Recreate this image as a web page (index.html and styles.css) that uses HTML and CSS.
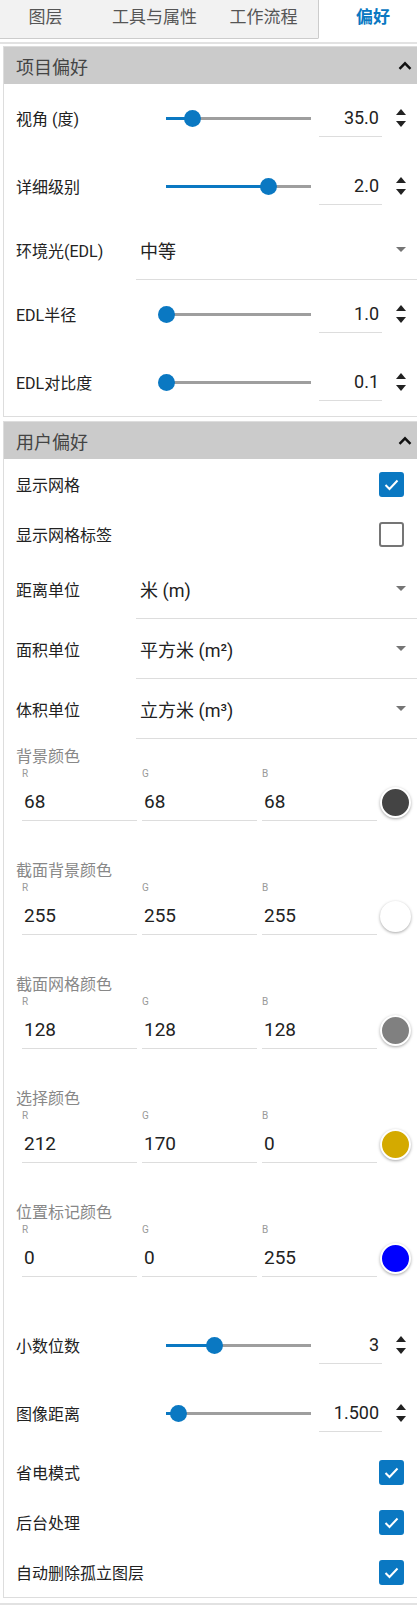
FILE: index.html
```html
<!DOCTYPE html>
<html lang="zh">
<head>
    <meta charset="UTF-8">
    <title>偏好</title>
    <link rel="stylesheet" href="styles.css">
</head>
<body>
<div id="tabs">
    <div class="inner">
        <a href="javascript:;" class="tab">图层</a>
        <a href="javascript:;" class="tab">工具与属性</a>
        <a href="javascript:;" class="tab">工作流程</a>
        <a href="javascript:;" class="tab on">偏好</a>
    </div>
</div>
<div class="divider"></div>

<!-- 项目偏好 -->
<div class="panel">
    <div class="panel-head">
        <span>项目偏好</span>
        <svg width="14" height="9" viewBox="0 0 14 9"><path d="M1.5 7.8 L7 2.3 L12.5 7.8" fill="none" stroke="#111" stroke-width="2.4"/></svg>
    </div>
    <div class="row row-slider">
        <span class="label">视角 (度)</span>
        <div class="slider"><div class="fill" style="width: 18.6%;"></div><span class="thumb" style="left: 18.6%;"></span></div>
        <div class="num">35.0</div>
        <div class="spin"><i class="up"></i><i class="down"></i></div>
    </div>
    <div class="row row-slider">
        <span class="label">详细级别</span>
        <div class="slider"><div class="fill" style="width: 71%;"></div><span class="thumb" style="left: 71%;"></span></div>
        <div class="num">2.0</div>
        <div class="spin"><i class="up"></i><i class="down"></i></div>
    </div>
    <div class="row row-select">
        <span class="label">环境光(EDL)</span>
        <div class="select"><span>中等</span><i class="caret"></i></div>
    </div>
    <div class="row row-slider">
        <span class="label">EDL半径</span>
        <div class="slider"><div class="fill" style="width: 0%;"></div><span class="thumb" style="left: 0%;"></span></div>
        <div class="num">1.0</div>
        <div class="spin"><i class="up"></i><i class="down"></i></div>
    </div>
    <div class="row row-slider">
        <span class="label">EDL对比度</span>
        <div class="slider"><div class="fill" style="width: 0%;"></div><span class="thumb" style="left: 0%;"></span></div>
        <div class="num">0.1</div>
        <div class="spin"><i class="up"></i><i class="down"></i></div>
    </div>
</div>

<!-- 用户偏好 -->
<div class="panel">
    <div class="panel-head">
        <span>用户偏好</span>
        <svg width="14" height="9" viewBox="0 0 14 9"><path d="M1.5 7.8 L7 2.3 L12.5 7.8" fill="none" stroke="#111" stroke-width="2.4"/></svg>
    </div>
    <div class="row row-check">
        <span class="label">显示网格</span>
        <span class="box checked"><svg width="21" height="21" viewBox="0 0 21 21"><path d="M4.5 11 L8.5 15 L16.5 6.5" fill="none" stroke="#fff" stroke-width="2"/></svg></span>
    </div>
    <div class="row row-check">
        <span class="label">显示网格标签</span>
        <span class="box"></span>
    </div>
    <div class="row row-select">
        <span class="label">距离单位</span>
        <div class="select"><span>米 (m)</span><i class="caret"></i></div>
    </div>
    <div class="row row-select">
        <span class="label">面积单位</span>
        <div class="select"><span>平方米 (m²)</span><i class="caret"></i></div>
    </div>
    <div class="row row-select">
        <span class="label">体积单位</span>
        <div class="select"><span>立方米 (m³)</span><i class="caret"></i></div>
    </div>

    <div class="color">
        <div class="color-name">背景颜色</div>
        <div class="rgb">
            <div class="field"><div class="key">R</div><div class="val">68</div></div>
            <div class="field"><div class="key">G</div><div class="val">68</div></div>
            <div class="field"><div class="key">B</div><div class="val">68</div></div>
            <span class="swatch" style="background: rgb(68,68,68);"></span>
        </div>
    </div>
    <div class="color">
        <div class="color-name">截面背景颜色</div>
        <div class="rgb">
            <div class="field"><div class="key">R</div><div class="val">255</div></div>
            <div class="field"><div class="key">G</div><div class="val">255</div></div>
            <div class="field"><div class="key">B</div><div class="val">255</div></div>
            <span class="swatch" style="background: rgb(255,255,255);"></span>
        </div>
    </div>
    <div class="color">
        <div class="color-name">截面网格颜色</div>
        <div class="rgb">
            <div class="field"><div class="key">R</div><div class="val">128</div></div>
            <div class="field"><div class="key">G</div><div class="val">128</div></div>
            <div class="field"><div class="key">B</div><div class="val">128</div></div>
            <span class="swatch" style="background: rgb(128,128,128);"></span>
        </div>
    </div>
    <div class="color">
        <div class="color-name">选择颜色</div>
        <div class="rgb">
            <div class="field"><div class="key">R</div><div class="val">212</div></div>
            <div class="field"><div class="key">G</div><div class="val">170</div></div>
            <div class="field"><div class="key">B</div><div class="val">0</div></div>
            <span class="swatch" style="background: rgb(212,170,0);"></span>
        </div>
    </div>
    <div class="color">
        <div class="color-name">位置标记颜色</div>
        <div class="rgb">
            <div class="field"><div class="key">R</div><div class="val">0</div></div>
            <div class="field"><div class="key">G</div><div class="val">0</div></div>
            <div class="field"><div class="key">B</div><div class="val">255</div></div>
            <span class="swatch" style="background: rgb(0,0,255);"></span>
        </div>
    </div>

    <div class="sliders">
        <div class="row row-slider">
            <span class="label">小数位数</span>
            <div class="slider"><div class="fill" style="width: 33.3%;"></div><span class="thumb" style="left: 33.3%;"></span></div>
            <div class="num">3</div>
            <div class="spin"><i class="up"></i><i class="down"></i></div>
        </div>
        <div class="row row-slider">
            <span class="label">图像距离</span>
            <div class="slider"><div class="fill" style="width: 8.3%;"></div><span class="thumb" style="left: 8.3%;"></span></div>
            <div class="num">1.500</div>
            <div class="spin"><i class="up"></i><i class="down"></i></div>
        </div>
    </div>
    <div class="row row-check">
        <span class="label">省电模式</span>
        <span class="box checked"><svg width="21" height="21" viewBox="0 0 21 21"><path d="M4.5 11 L8.5 15 L16.5 6.5" fill="none" stroke="#fff" stroke-width="2"/></svg></span>
    </div>
    <div class="row row-check">
        <span class="label">后台处理</span>
        <span class="box checked"><svg width="21" height="21" viewBox="0 0 21 21"><path d="M4.5 11 L8.5 15 L16.5 6.5" fill="none" stroke="#fff" stroke-width="2"/></svg></span>
    </div>
    <div class="row row-check">
        <span class="label">自动删除孤立图层</span>
        <span class="box checked"><svg width="21" height="21" viewBox="0 0 21 21"><path d="M4.5 11 L8.5 15 L16.5 6.5" fill="none" stroke="#fff" stroke-width="2"/></svg></span>
    </div>
</div>
<div class="end"></div>
</body>
</html>
```

FILE: styles.css
```css
*{
    margin: 0;
    padding: 0;
    box-sizing: border-box;
}
a{
    text-decoration: none;
}
body {
    width: 417px;
    overflow: hidden;
    background: #fff;
    color: #222;
    font-family: Roboto, "Noto Sans CJK SC", sans-serif;
}
/* 顶部标签栏 */
#tabs {
    height: 39px;
    overflow: hidden;
    background: #f2f2f2;
}
#tabs .inner {
    display: flex;
    margin-left: -9px;   /*第一个标签被滚出左边*/
}
.tab {
    flex: none;
    width: 109px;
    height: 39px;
    line-height: 34px;
    text-align: center;
    font-size: 17px;
    color: #555;
    border-bottom: 1px solid #ccc;
}
.tab.on {
    background: #fff;
    color: #0a78c2;
    font-weight: bold;
    border-left: 1px solid #ccc;
    border-bottom-color: #fff;
}
.divider {
    height: 2px;
    margin-top: 3px;
    background: #e2e2e2;
}
/* 面板 */
.panel {
    width: 417px;
    margin: 2px 0 4px 3px;
    border: 1px solid #ddd;
}
.panel-head {
    height: 37px;
    display: flex;
    align-items: center;
    justify-content: space-between;
    padding: 0 7px 0 12px;
    background: #cbcbcb;
    font-size: 18px;
    color: #444;
}
.row {
    display: flex;
    align-items: center;
    padding-left: 12px;
    font-size: 16px;
}
.label {
    flex: none;
}
/* 滑块行 */
.row-slider {
    height: 68px;
}
.row-slider .label {
    width: 150px;
}
.slider {
    position: relative;
    flex: none;
    width: 145px;
    height: 3px;
    background: #9e9e9e;
}
.slider .fill {
    height: 100%;
    background: #0a78c2;
}
.slider .thumb {
    position: absolute;   /*圆点压在轨道上*/
    top: 50%;
    width: 17px;
    height: 17px;
    margin: -8.5px 0 0 -8.5px;
    border-radius: 50%;
    background: #0a78c2;
}
.num {
    flex: none;
    width: 63px;
    height: 37px;
    margin-left: 8px;
    padding-right: 3px;
    border-bottom: 1px solid #ddd;
    text-align: right;
    font-size: 18px;
    line-height: 36px;
}
.spin {
    display: flex;
    flex-direction: column;
    gap: 6px;
    margin-left: 14px;
}
.spin i {
    width: 0;
    height: 0;
    border-left: 5px solid transparent;
    border-right: 5px solid transparent;
}
.spin .up {
    border-bottom: 6px solid #222;
}
.spin .down {
    border-top: 6px solid #222;
}
/* 下拉行 */
.row-select {
    height: 60px;
}
.row-select .label {
    width: 120px;
}
.select {
    flex: 1;
    height: 100%;
    display: flex;
    align-items: center;
    justify-content: space-between;
    padding: 0 13px 0 4px;
    border-bottom: 1px solid #ddd;
    font-size: 18px;
}
.caret {
    width: 0;
    height: 0;
    border-left: 5px solid transparent;
    border-right: 5px solid transparent;
    border-top: 5px solid #757575;
}
/* 复选框行 */
.row-check {
    height: 50px;
    justify-content: space-between;
    padding-right: 15px;
}
.box {
    display: flex;
    align-items: center;
    justify-content: center;
    width: 25px;
    height: 25px;
    border: 2px solid #757575;
    border-radius: 3px;
}
.box.checked {
    background: #0a78c2;
    border-color: #0a78c2;
}
/* 颜色 */
.color {
    height: 114px;
    padding: 7px 0 0 12px;
}
.color-name {
    font-size: 16px;
    line-height: 22px;
    color: #888;
}
.rgb {
    display: flex;
    align-items: flex-end;
    gap: 5px;
    padding-left: 6px;
}
.field {
    width: 115px;
}
.field .key {
    font-size: 10px;
    line-height: 12px;
    color: #999;
}
.field .val {
    height: 41px;
    padding: 11px 0 0 2px;
    border-bottom: 1px solid #ddd;
    font-size: 19px;
    line-height: 22px;
}
.swatch {
    width: 31px;
    height: 31px;
    margin: 0 0 3px -2px;
    border: 2px solid #fff;
    border-radius: 50%;
    box-shadow: 0 1px 3px rgba(0,0,0,.35);
}
.sliders {
    margin-top: 2px;
}
.end {
    height: 6px;
    margin-top: 5px;
    border-top: 2px solid #e2e2e2;
}
```
